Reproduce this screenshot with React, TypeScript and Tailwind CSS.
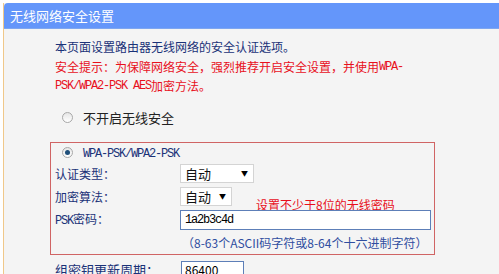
import React from 'react';

const cjk = { fontFamily: '"SimSun", "Noto Sans CJK SC", sans-serif' };
const mono = { fontFamily: '"Liberation Mono", "Noto Sans CJK SC", monospace' };

function Radio({ checked }: { checked?: boolean }) {
  return (
    <span className="w-[11px] h-[11px] rounded-full border border-[#a8a8a8] bg-gradient-to-b from-[#e6e6e6] to-white flex items-center justify-center">
      {checked && <span className="w-[5px] h-[5px] rounded-full bg-[#1f4f7a]" />}
    </span>
  );
}

function Select({ width }: { width: string }) {
  return (
    <div className={`${width} h-[19px] bg-white border border-[#d4d4d4] flex items-center justify-between pl-[4px] pr-[5px] text-[13px] text-[#111]`}>
      <span>自动</span>
      <span className="text-[7px] text-black">▼</span>
    </div>
  );
}

function Latin({ children }: { children: React.ReactNode }) {
  return (
    <span className="text-[12px] tracking-[-1.2px]" style={mono}>
      {children}
    </span>
  );
}

function App() {
  return (
    <div className="w-[499px] h-[274px] overflow-hidden bg-white text-[12px] leading-none" style={cjk}>
      <div className="pt-[3px] pl-[3px] h-full">
        <div className="h-full border-l border-[#f0c88a] bg-[#f4f4f4] flex flex-col">
          <div className="h-[26px] shrink-0 bg-[#6496fa] rounded-tl-[4px] flex items-center pl-[6px] text-white text-[13px] border-b border-[#7ea6f0]">
            无线网络安全设置
          </div>

          <div className="pl-[51px] pt-[8px] flex flex-col">
            <div className="h-[20px] flex items-center text-[#1a3278]">本页面设置路由器无线网络的安全认证选项。</div>
            <div className="h-[19px] flex items-center text-[#e8101c]">
              安全提示：为保障网络安全，强烈推荐开启安全设置，并使用<Latin>WPA-</Latin>
            </div>
            <div className="h-[19px] flex items-center text-[#e8101c]">
              <Latin>PSK/WPA2-PSK AES</Latin>加密方法。
            </div>
            <div className="h-[20px] mt-[12px] flex items-center pl-[7px] gap-[10px]">
              <Radio />
              <span className="text-[13px] text-[#222]">不开启无线安全</span>
            </div>
          </div>

          <div className="ml-[46px] mt-[15px] w-[385px] h-[113px] shrink-0 border border-[#d06464] flex flex-col pl-[4px]">
            <div className="h-[19px] flex items-center pl-[7px] gap-[10px]">
              <Radio checked />
              <span className="text-[#1a3278]">
                <Latin>WPA-PSK/WPA2-PSK</Latin>
              </span>
            </div>
            <div className="h-[23px] flex items-center">
              <span className="w-[125px] text-[#1a3278]">认证类型：</span>
              <Select width="w-[74px]" />
            </div>
            <div className="h-[23px] flex items-center">
              <span className="w-[125px] text-[#1a3278]">加密算法：</span>
              <Select width="w-[52px]" />
              <span className="ml-[24px] mt-[16px] text-[#e8101c]">设置不少于8位的无线密码</span>
            </div>
            <div className="h-[23px] flex items-center">
              <span className="w-[125px] text-[#1a3278]">
                <Latin>PSK</Latin>密码：
              </span>
              <div className="w-[251px] h-[20px] bg-white border border-[#5d7fb8] flex items-center pl-[4px] text-black">
                <Latin>1a2b3c4d</Latin>
              </div>
            </div>
            <div className="h-[23px] flex items-center pl-[127px] text-[#2f4da0] whitespace-nowrap">
              （8-63个ASCII码字符或8-64个十六进制字符）
            </div>
          </div>

          <div className="pl-[51px] mt-[3px] h-[22px] shrink-0 flex items-center">
            <span className="w-[126px] text-[#1a3278] text-[13px]">组密钥更新周期：</span>
            <div className="w-[63px] h-[18px] mt-[2px] bg-white border border-[#5d7fb8] flex items-center pl-[3px] text-[12px] text-black">
              86400
            </div>
          </div>
        </div>
      </div>
    </div>
  );
}

export default App;
